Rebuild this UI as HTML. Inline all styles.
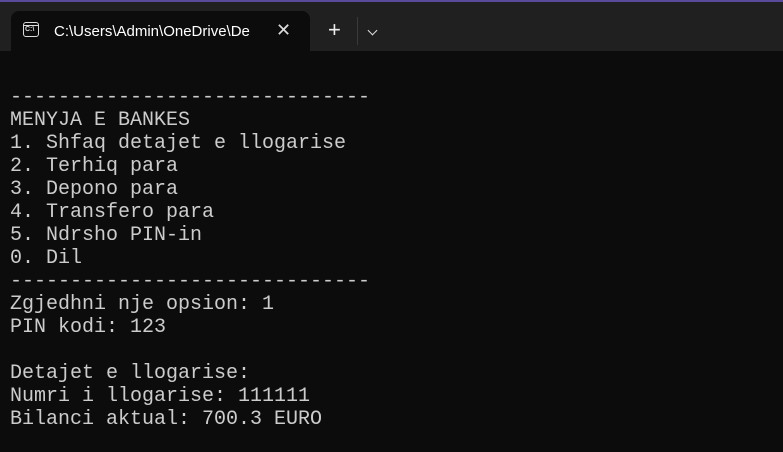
<!DOCTYPE html>
<html><head><style>
body{margin:0;width:783px;height:452px;background:#0c0c0c;overflow:hidden;position:relative;font-family:"Liberation Sans",sans-serif}
.top{position:absolute;left:0;top:0;width:783px;height:51px;background:#202020;border-top:2px solid #5a4a9a;box-sizing:border-box}
.tab{position:absolute;left:11px;top:11px;width:299px;height:41px;background:#0c0c0c;border-radius:8px 8px 0 0}
.title{position:absolute;left:54px;top:23px;color:#fff;font-size:15px}
.x{position:absolute;left:276px;top:20px;color:#ddd;font-size:18px}
.plus{position:absolute;left:328px;top:17px;color:#eee;font-size:22px}
.sep{position:absolute;left:357px;top:17px;width:1px;height:28px;background:#3a3a3a}
.chev{position:absolute;left:369px;top:27px;width:6px;height:6px;border-right:1.5px solid #ddd;border-bottom:1.5px solid #ddd;transform:rotate(45deg)}
.icon{position:absolute;left:23px;top:22px;width:16px;height:15px;border:1.5px solid #ddd;border-radius:3px;box-sizing:border-box}
.icon:before{content:"";position:absolute;left:0;right:0;top:2px;border-top:1.5px solid #ddd}
.icon span{position:absolute;left:1px;top:3px;font-size:7px;color:#ddd;font-weight:bold}
pre{position:absolute;left:10px;top:86px;margin:0;font-family:"Liberation Mono",monospace;font-size:20px;line-height:23px;color:#cccccc}
</style></head><body>
<div class="top"></div>
<div class="tab"></div>
<div class="icon"><span>C:\</span></div>
<div class="title">C:\Users\Admin\OneDrive\De</div>
<div class="x">✕</div>
<div class="plus">+</div>
<div class="sep"></div>
<div class="chev"></div>
<pre>------------------------------
MENYJA E BANKES
1. Shfaq detajet e llogarise
2. Terhiq para
3. Depono para
4. Transfero para
5. Ndrsho PIN-in
0. Dil
------------------------------
Zgjedhni nje opsion: 1
PIN kodi: 123

Detajet e llogarise:
Numri i llogarise: 111111
Bilanci aktual: 700.3 EURO</pre>
</body></html>
